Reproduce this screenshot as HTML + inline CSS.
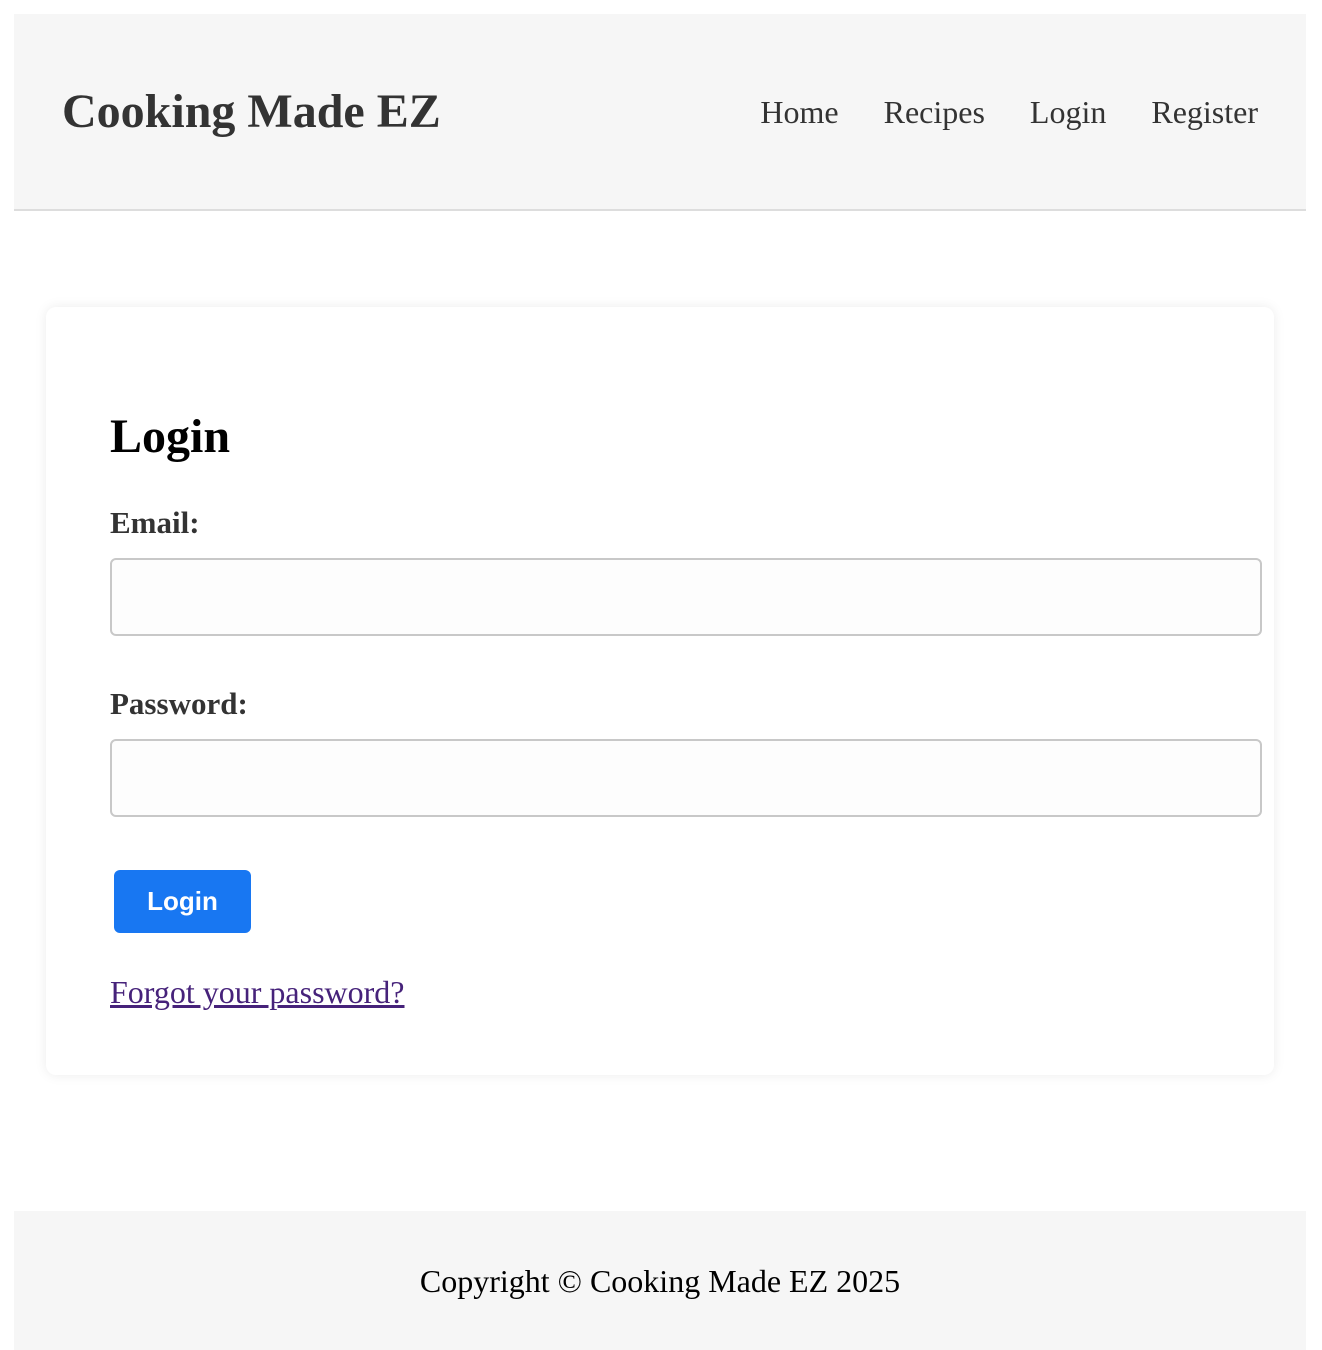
<!DOCTYPE html>
<html><head><meta charset="utf-8"><style>
body{margin:14px;font-family:"Liberation Serif",serif;background:#fff;color:#333}
header{width:1292px;height:195px;background:#f6f6f6;border-bottom:2px solid #ddd;position:relative}
.logo{position:absolute;left:48px;top:70px;font-size:48px;font-weight:bold;color:#333;line-height:56px}
nav{position:absolute;right:48px;top:80px;font-size:32px;line-height:36px}
nav a{color:#333;text-decoration:none;margin-left:45px}
.card{position:absolute;left:46px;top:307px;width:1228px;height:768px;background:#fff;border-radius:10px;box-shadow:0 0 12px rgba(0,0,0,0.08)}
h2{position:absolute;left:64px;top:102px;margin:0;font-size:48px;line-height:56px;color:#000}
label{position:absolute;left:64px;font-size:31px;font-weight:bold;color:#333;line-height:34px}
.inp{position:absolute;left:64px;width:1148px;height:74px;border:2px solid #c8c8c8;border-radius:6px;background:#fdfdfd}
.btn{position:absolute;left:68px;top:563px;width:137px;height:63px;background:#1877f2;border-radius:6px;color:#fff;font-family:"Liberation Sans",sans-serif;font-weight:bold;font-size:26px;line-height:63px;text-align:center}
.fp{position:absolute;left:64px;top:667px;font-size:32px;line-height:36px;color:#46227a;text-decoration:underline}
footer{position:absolute;left:14px;top:1211px;width:1292px;height:139px;background:#f6f6f6;text-align:center;font-size:32px;line-height:36px;color:#000}
footer div{padding-top:52px}
</style></head><body>
<header><div class="logo">Cooking Made EZ</div>
<nav><a>Home</a><a>Recipes</a><a>Login</a><a>Register</a></nav></header>
<div class="card">
<h2>Login</h2>
<label style="top:199px">Email:</label>
<div class="inp" style="top:251px"></div>
<label style="top:380px">Password:</label>
<div class="inp" style="top:432px"></div>
<div class="btn">Login</div>
<a class="fp">Forgot your password?</a>
</div>
<footer><div>Copyright © Cooking Made EZ 2025</div></footer>
</body></html>
